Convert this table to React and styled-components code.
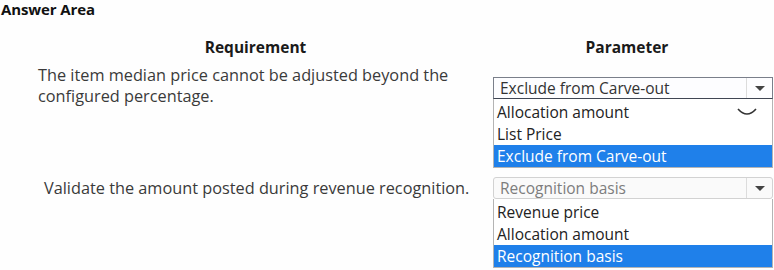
import styled, { createGlobalStyle } from "styled-components";

const GlobalStyle = createGlobalStyle`
  html, body {
    margin: 0;
    padding: 0;
    background: #fff;
  }
  body {
    font-family: "Open Sans", "Noto Sans", sans-serif;
    color: #333;
  }
`;

const Page = styled.div`
  width: 774px;
  height: 270px;
  overflow: hidden;
  background: #fefefe;
`;

const Title = styled.div`
  font-weight: 700;
  font-size: 15px;
  line-height: 18px;
  padding: 0 0 0 1px;
  color: #111;
  letter-spacing: -0.1px;
`;

const Table = styled.div`
  display: grid;
  grid-template-columns: 493px 280px;
  grid-template-rows: 20px auto auto;
  margin-top: 19px;
`;

// centred header; $left / $right nudge the centre of the text
const Heading = styled.div`
  font-weight: 700;
  font-size: 15.5px;
  line-height: 20px;
  color: #1a1a1a;
  text-align: center;
  padding-left: ${(p) => p.$left || 0}px;
  padding-right: ${(p) => p.$right || 0}px;
`;

const Requirement = styled.div`
  font-size: 16.3px;
  line-height: 21px;
  color: #3a3a3a;
  padding-left: ${(p) => p.$indent}px;
  padding-top: ${(p) => p.$top}px;
  width: 440px;
`;

const Cell = styled.div`
  padding-top: ${(p) => p.$top}px;
`;

const Select = styled.div`
  height: 20px;
  display: flex;
  align-items: center;
  border: 1px solid ${(p) => (p.$active ? "#7a7f8a" : "#d2d2d2")};
  border-bottom-color: ${(p) => (p.$active ? "#404654" : "#d2d2d2")};
  border-radius: ${(p) => (p.$active ? "0" : "3px")};
  background: ${(p) => (p.$active ? "#fdfdff" : "#fafafa")};
  color: ${(p) => (p.$active ? "#333" : "#7d7d7d")};
  font-size: 15.5px;
  padding-left: 6px;
`;

const SelectText = styled.span`
  flex: 1;
  white-space: nowrap;
`;

const ArrowBox = styled.div`
  width: 25px;
  height: 100%;
  display: flex;
  align-items: center;
  justify-content: center;
  border-left: 1px solid #dcdcdc;
`;

const Arrow = styled.span`
  width: 0;
  height: 0;
  border-left: 5px solid transparent;
  border-right: 5px solid transparent;
  border-top: 5px solid #444;
`;

const List = styled.div`
  position: relative;
  border: 1px solid #b4b4b4;
  border-top: none;
  padding-top: 2px;
  background: #fff;
`;

const Option = styled.div`
  height: 22px;
  line-height: 22px;
  font-size: 15.5px;
  padding-left: 3px;
  color: ${(p) => (p.$selected ? "#fff" : "#222")};
  background: ${(p) => (p.$selected ? "#1f80ea" : "transparent")};
  white-space: nowrap;
`;

const Mark = styled.svg`
  position: absolute;
  right: 14px;
  top: 8px;
`;

function Dropdown({ value, options, selected, active, top, mark }) {
  return (
    <Cell $top={top}>
      <Select $active={active}>
        <SelectText>{value}</SelectText>
        <ArrowBox>
          <Arrow />
        </ArrowBox>
      </Select>
      <List>
        {mark && (
          <Mark width="22" height="10" viewBox="0 0 22 10">
            <path d="M2 2 Q11 12 20 2" fill="none" stroke="#333" strokeWidth="1.6" />
          </Mark>
        )}
        {options.map((o) => (
          <Option key={o} $selected={o === selected}>
            {o}
          </Option>
        ))}
      </List>
    </Cell>
  );
}

export default function App() {
  return (
    <Page>
      <GlobalStyle />
      <Title>Answer Area</Title>
      <Table>
        <Heading $left={18}>Requirement</Heading>
        <Heading $right={12}>Parameter</Heading>
        <Requirement $indent={38} $top={8}>
          The item median price cannot be adjusted beyond the configured percentage.
        </Requirement>
        <Dropdown
          top={20}
          active
          value="Exclude from Carve-out"
          options={["Allocation amount", "List Price", "Exclude from Carve-out"]}
          selected="Exclude from Carve-out"
          mark
        />
        <Requirement $indent={44} $top={10}>
          Validate the amount posted during revenue recognition.
        </Requirement>
        <Dropdown
          top={9}
          value="Recognition basis"
          options={["Revenue price", "Allocation amount", "Recognition basis"]}
          selected="Recognition basis"
        />
      </Table>
    </Page>
  );
}
